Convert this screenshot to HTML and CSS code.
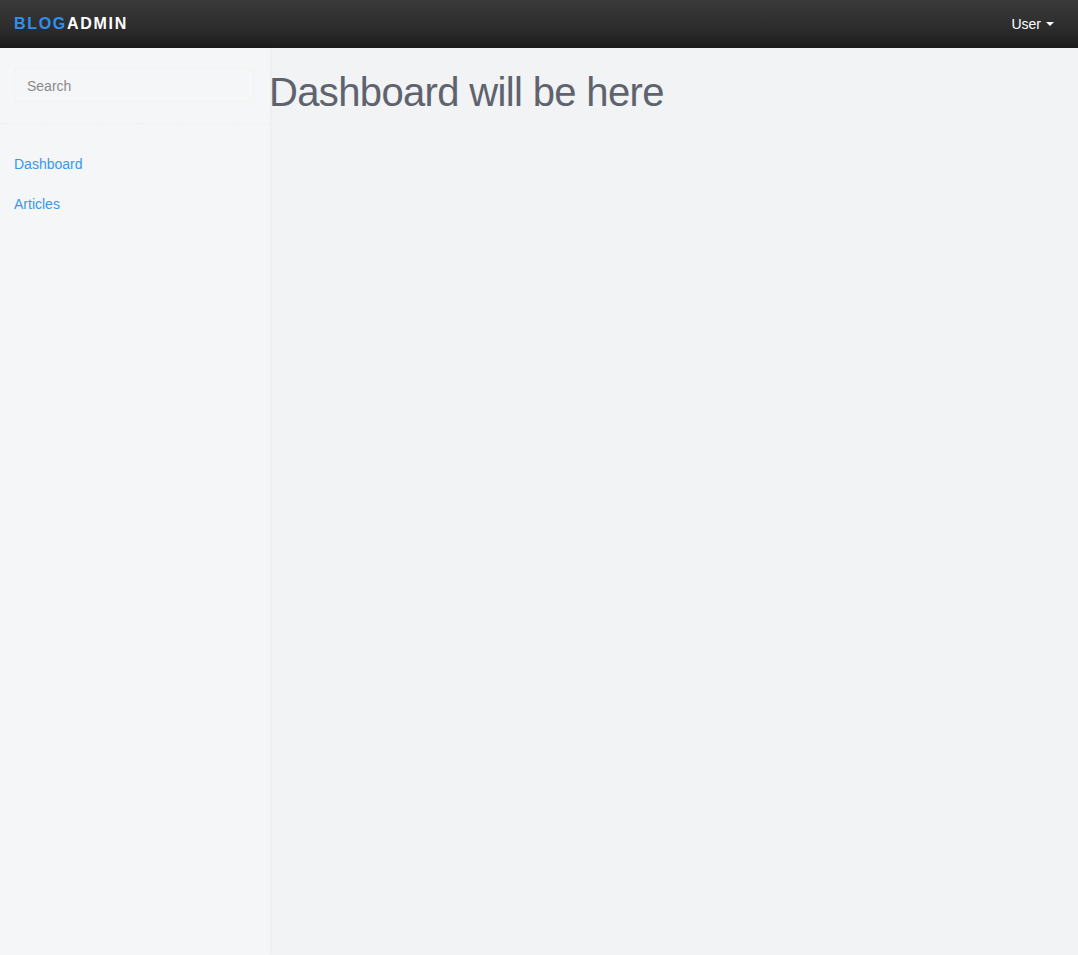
FILE: index.html
```html
<!DOCTYPE html>
<html>
<head>
<meta charset="utf-8">
<title>Blog Admin</title>
<link rel="stylesheet" href="styles.css">
</head>
<body>
<header class="navbar">
  <a class="brand" href="#"><span class="brand-blue">BLOG</span>ADMIN</a>
  <div class="user-menu">User <span class="caret"></span></div>
</header>
<div class="layout">
  <aside class="sidebar">
    <div class="search-wrap">
      <input class="search" type="text" placeholder="Search">
    </div>
    <nav class="side-nav">
      <a href="#" class="side-link">Dashboard</a>
      <a href="#" class="side-link">Articles</a>
    </nav>
  </aside>
  <main class="content">
    <h1 class="title">Dashboard will be here</h1>
  </main>
</div>
</body>
</html>
```
FILE: styles.css
```css
* { box-sizing: border-box; }
html, body { height: 100%; }
body {
  margin: 0;
  font-family: "Liberation Sans", Arial, sans-serif;
  background: #f1f3f5;
  display: flex;
  flex-direction: column;
}
.navbar {
  height: 48px;
  flex: 0 0 48px;
  background: linear-gradient(#3a3a3a, #2c2c2c 60%, #1b1b1b);
  display: flex;
  align-items: center;
  justify-content: space-between;
  padding: 0 24px 0 14px;
}
.brand {
  font-weight: bold;
  font-size: 16px;
  letter-spacing: 1.7px;
  color: #ffffff;
  text-decoration: none;
}
.brand-blue { color: #2d90f0; }
.user-menu {
  color: #ffffff;
  font-size: 14px;
  display: flex;
  align-items: center;
  gap: 5px;
}
.caret {
  width: 0; height: 0;
  border-left: 4px solid transparent;
  border-right: 4px solid transparent;
  border-top: 4px solid #ffffff;
}
.layout {
  flex: 1;
  display: flex;
}
.sidebar {
  width: 270px;
  flex: 0 0 270px;
  background: #f5f6f8;
  box-shadow: 1px 0 3px rgba(0,0,0,0.03);
}
.search-wrap {
  padding: 20px 14px 21px;
  border-bottom: 1px dashed #eef0f2;
}
.search {
  width: 240px;
  height: 34px;
  border: 1px dotted #efefe4;
  background: transparent;
  padding: 1px 12px 0;
  font-family: inherit;
  font-size: 14px;
  color: #555;
  outline: none;
}
.search::placeholder { color: #8a8a8a; }
.side-nav {
  display: flex;
  flex-direction: column;
  padding-top: 20px;
}
.side-link {
  color: #3399f3;
  font-size: 14px;
  text-decoration: none;
  padding: 10px 14px;
  line-height: 20px;
}
.content {
  flex: 1;
  padding: 0;
}
.title {
  margin: 22px 0 0 -1px;
  font-weight: normal;
  font-size: 40px;
  letter-spacing: -0.65px;
  line-height: 44px;
  color: #5e636e;
}
```
